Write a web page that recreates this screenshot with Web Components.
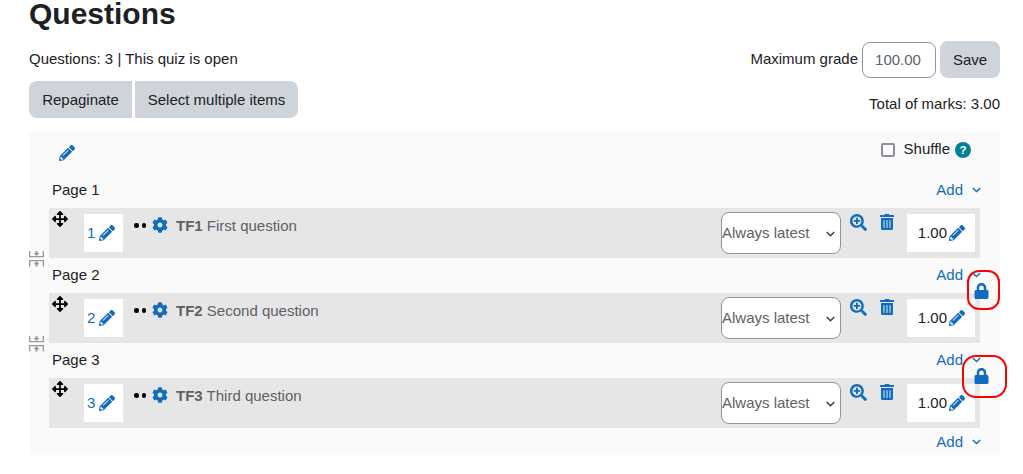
<!DOCTYPE html>
<html><head><meta charset="utf-8">
<style>
html,body{margin:0;padding:0;background:#fff;font-family:"Liberation Sans",Arial,sans-serif;font-size:15px;color:#1d2125;}
body{height:474px;overflow:hidden;}
</style></head>
<body>
<quiz-page></quiz-page>
<script>
const P={
pencil:[512,'M497.9 142.1l-46.1 46.1c-4.7 4.7-12.3 4.7-17 0l-111-111c-4.7-4.7-4.7-12.3 0-17l46.1-46.1c18.7-18.7 49.1-18.7 67.9 0l60.1 60.1c18.8 18.7 18.8 49.1 0 67.9zM284.2 99.8L21.6 362.4.4 483.9c-2.9 16.4 11.4 30.6 27.8 27.8l121.5-21.3 262.6-262.6c4.7-4.7 4.7-12.3 0-17l-111-111c-4.8-4.7-12.4-4.7-17.1 0zM124.1 339.9c-5.5-5.5-5.5-14.3 0-19.8l154-154c5.5-5.5 14.3-5.5 19.8 0s5.5 14.3 0 19.8l-154 154c-5.5 5.5-14.3 5.5-19.8 0zM88 424h48v36.3l-64.5 11.3-31.1-31.1L51.7 376H88v48z'],
move:[512,'M352.201 425.775l-79.196 79.196c-9.373 9.373-24.568 9.373-33.941 0l-79.196-79.196c-15.119-15.119-4.411-40.971 16.971-40.97h51.162L228 284H127.196v51.162c0 21.382-25.851 32.09-40.971 16.971L7.029 272.937c-9.373-9.373-9.373-24.569 0-33.941L86.225 159.8c15.119-15.119 40.971-4.411 40.971 16.971V228H228V127.196h-51.23c-21.382 0-32.09-25.851-16.971-40.971l79.196-79.196c9.373-9.373 24.568-9.373 33.941 0l79.196 79.196c15.119 15.119 4.411 40.971-16.971 40.971h-51.162V228h100.804v-51.162c0-21.382 25.851-32.09 40.97-16.971l79.196 79.196c9.373 9.373 9.373 24.569 0 33.941L425.773 352.2c-15.119 15.119-40.971 4.411-40.97-16.971V284H284v100.804h51.23c21.382 0 32.09 25.851 16.971 40.971z'],
cog:[512,'M487.4 315.7l-42.6-24.6c4.3-23.2 4.3-47 0-70.2l42.6-24.6c4.9-2.8 7.1-8.6 5.5-14-11.1-35.6-30-67.8-54.7-94.6-3.8-4.1-10-5.1-14.8-2.3L380.8 110c-17.9-15.4-38.5-27.3-60.8-35.1V25.8c0-5.6-3.9-10.5-9.4-11.7-36.7-8.2-74.3-7.8-109.2 0-5.5 1.2-9.4 6.1-9.4 11.7V75c-22.2 7.9-42.8 19.8-60.8 35.1L88.7 85.5c-4.9-2.8-11-1.9-14.8 2.3-24.7 26.7-43.6 58.9-54.7 94.6-1.7 5.4.6 11.2 5.5 14L67.3 221c-4.3 23.2-4.3 47 0 70.2l-42.6 24.6c-4.9 2.8-7.1 8.6-5.5 14 11.1 35.6 30 67.8 54.7 94.6 3.8 4.1 10 5.1 14.8 2.3l42.6-24.6c17.9 15.4 38.5 27.3 60.8 35.1v49.2c0 5.6 3.9 10.5 9.4 11.7 36.7 8.2 74.3 7.8 109.2 0 5.5-1.2 9.4-6.1 9.4-11.7v-49.2c22.2-7.9 42.8-19.8 60.8-35.1l42.6 24.6c4.9 2.8 11 1.9 14.8-2.3 24.7-26.7 43.6-58.9 54.7-94.6 1.5-5.5-.7-11.3-5.6-14.1zM256 336c-44.1 0-80-35.9-80-80s35.9-80 80-80 80 35.9 80 80-35.9 80-80 80z'],
search:[512,'M304 192v32c0 6.6-5.4 12-12 12h-56v56c0 6.6-5.4 12-12 12h-32c-6.6 0-12-5.4-12-12v-56h-56c-6.6 0-12-5.4-12-12v-32c0-6.6 5.4-12 12-12h56v-56c0-6.6 5.4-12 12-12h32c6.6 0 12 5.4 12 12v56h56c6.6 0 12 5.4 12 12zm201 284.7L476.7 505c-9.4 9.4-24.6 9.4-33.9 0L343 405.3c-4.5-4.5-7-10.6-7-17V372c-35.3 27.6-79.7 44-128 44C93.1 416 0 322.9 0 208S93.1 0 208 0s208 93.1 208 208c0 48.3-16.4 92.7-44 128h16.3c6.4 0 12.5 2.5 17 7l99.7 99.7c9.3 9.4 9.3 24.6 0 34zM344 208c0-75.2-60.8-136-136-136S72 132.8 72 208s60.8 136 136 136 136-60.8 136-136z'],
trash:[448,'M32 464a48 48 0 0 0 48 48h288a48 48 0 0 0 48-48V128H32zm272-256a16 16 0 0 1 32 0v224a16 16 0 0 1-32 0zm-96 0a16 16 0 0 1 32 0v224a16 16 0 0 1-32 0zm-96 0a16 16 0 0 1 32 0v224a16 16 0 0 1-32 0zM432 32H312l-9.4-18.7A24 24 0 0 0 281.1 0H166.8a23.72 23.72 0 0 0-21.4 13.3L136 32H16A16 16 0 0 0 0 48v32a16 16 0 0 0 16 16h416a16 16 0 0 0 16-16V48a16 16 0 0 0-16-16z'],
lock:[448,'M400 224h-24v-72C376 68.2 307.8 0 224 0S72 68.2 72 152v72H48c-26.5 0-48 21.5-48 48v192c0 26.5 21.5 48 48 48h352c26.5 0 48-21.5 48-48V272c0-26.5-21.5-48-48-48zm-104 0H152v-72c0-39.7 32.3-72 72-72s72 32.3 72 72v72z']
};
class QIcon extends HTMLElement{
 connectedCallback(){
  if(this.shadowRoot)return;
  const [w,d]=P[this.getAttribute('name')];
  const s=this.attachShadow({mode:'open'});
  s.innerHTML=`<style>:host{display:block;line-height:0;color:#0f6cbf}svg{display:block;width:100%;height:100%;fill:currentColor}</style><svg viewBox="0 0 ${w} 512"><path d="${d}"/></svg>`;
 }
}
customElements.define('q-icon',QIcon);
class QHelp extends HTMLElement{
 constructor(){super();this.attachShadow({mode:'open'}).innerHTML=`<style>:host{display:flex;align-items:center;justify-content:center;width:16px;height:16px;border-radius:50%;background:#008196;color:#fff;font:700 11.5px/16px "Liberation Sans",Arial,sans-serif}</style>?`;}
}
customElements.define('q-help',QHelp);
class QBtn extends HTMLElement{
 constructor(){super();this.attachShadow({mode:'open'}).innerHTML=`<style>:host{display:flex;align-items:center;justify-content:center;background:#ced4da;color:#1d2125;height:37px;font-size:15px;box-sizing:border-box}</style><slot></slot>`;}
}
customElements.define('q-btn',QBtn);
class PageHead extends HTMLElement{
 constructor(){super();this.attachShadow({mode:'open'}).innerHTML=`<style>
 :host{display:flex;justify-content:space-between;align-items:flex-start;box-sizing:border-box;height:35px;padding:6px 19px 0 23px}
 .add{display:flex;align-items:center;gap:9px;color:#0f6cbf;height:22px}
 svg{width:9px;height:6px;fill:none;stroke:#0f6cbf;stroke-width:1.4}
 </style><span><slot></slot></span><span class="add">Add<svg viewBox="0 0 9 6"><path d="M.8 1l3.7 3.6L8.2 1"/></svg></span>`;}
}
customElements.define('page-head',PageHead);
class QRow extends HTMLElement{
 constructor(){super();this.attachShadow({mode:'open'}).innerHTML=`<style>
 :host{display:flex;height:50px;margin-left:20px;margin-right:20px;background:#e6e6e6;color:#5c6268}
 .mv{margin:3px 0 0 3px;width:16px;height:16px;color:#000}
 .num{display:flex;align-items:center;box-sizing:border-box;width:39px;height:38px;margin:6px 0 0 16px;padding-left:3px;background:#fff;color:#0f6cbf;gap:3.5px}
 .pen{width:16px;height:16px}
 .dots{display:flex;gap:3px;margin:15px 0 0 11px;height:5px}
 .dots i{width:4.5px;height:4.5px;border-radius:50%;background:#000;display:block}
 .cog{width:16px;height:16px;margin:9px 0 0 6px}
 .name{margin:9px 0 0 8px;line-height:17px;flex:1;white-space:nowrap}
 b{font-weight:700}
 .sel{box-sizing:border-box;width:120px;height:42px;margin-top:4px;border:1px solid #8f959e;border-radius:8px;background:#fff;color:#5c6268;display:flex;align-items:center;justify-content:space-between;padding-right:5px}
 .sel svg{width:9px;height:6px;fill:none;stroke:#343a40;stroke-width:1.5;margin-top:1px}
 .zoom{width:17px;height:17px;margin:6px 0 0 9px}
 .del{width:14px;height:16px;margin:6px 0 0 13px}
 .mark{box-sizing:border-box;width:68px;height:38px;margin:6px 5px 0 13px;background:#fff;color:#1d2125;display:flex;align-items:center;justify-content:flex-end;gap:2px;padding-right:10px}
 </style>
 <q-icon class="mv" name="move"></q-icon>
 <div class="num"><span id="n"></span><q-icon class="pen" name="pencil"></q-icon></div>
 <div class="dots"><i></i><i></i></div>
 <q-icon class="cog" name="cog"></q-icon>
 <div class="name"><b id="c"></b> <span id="t"></span></div>
 <div class="sel"><span>Always latest</span><svg viewBox="0 0 10 6"><path d="M.8 .8L5 5l4.2-4.2"/></svg></div>
 <q-icon class="zoom" name="search"></q-icon>
 <q-icon class="del" name="trash"></q-icon>
 <div class="mark"><span>1.00</span><q-icon class="pen" name="pencil"></q-icon></div>`;}
 connectedCallback(){
  const s=this.shadowRoot;
  s.getElementById('n').textContent=this.getAttribute('num');
  s.getElementById('c').textContent=this.getAttribute('code');
  s.getElementById('t').textContent=this.getAttribute('title');
 }
}
customElements.define('q-row',QRow);
class JoinIcon extends HTMLElement{
 constructor(){super();this.attachShadow({mode:'open'}).innerHTML=`<style>:host{display:block;position:absolute;left:0;width:15px;height:16px;line-height:0}svg{display:block}</style>
 <svg width="15" height="16" viewBox="0 0 15 16"><path fill="#9a9a9a" d="M0 0h1.3v5h12.4V0H15v6.3H0zM0 9h15v6.5h-1.3v-5.2H1.3v5.2H0zM6.5 0h2v2h2L7.5 5 4.5 2h2zM7.5 10.3l3 3h-2v2.2h-2v-2.2h-2z"/></svg>`;}
}
customElements.define('join-icon',JoinIcon);
class LockMark extends HTMLElement{
 constructor(){super();this.attachShadow({mode:'open'}).innerHTML=`<style>
 :host{display:block;position:absolute;box-sizing:border-box;border:2px solid #f00}
 q-icon{position:absolute;width:15px;height:16px}
 </style><q-icon name="lock"></q-icon>`;}
 connectedCallback(){
  const q=this.shadowRoot.querySelector('q-icon');
  q.style.left=this.getAttribute('ix')+'px';q.style.top=this.getAttribute('iy')+'px';
 }
}
customElements.define('lock-mark',LockMark);
class QuizPage extends HTMLElement{
 constructor(){super();this.attachShadow({mode:'open'}).innerHTML=`<style>
 :host{display:block;position:relative;padding:0 23px 0 29px;font:15px/22px "Liberation Sans",Arial,sans-serif;color:#1d2125}
 h2{margin:0;font-size:30px;line-height:28px;font-weight:700;height:28px}
 .top{display:flex;justify-content:space-between;margin-top:13px;height:37px;align-items:center}
 .mg{display:flex;align-items:center;gap:4px}
 .mg>span{margin-top:-2px}
 .input{box-sizing:border-box;width:74px;height:36px;border:1px solid #8f959e;border-radius:8px;display:flex;align-items:center;justify-content:center;color:#5c6268;background:#fff;padding-right:2px}
 .info{margin-top:-2px}
 .second{display:flex;justify-content:space-between;margin-top:3px;height:37px}
 .btns{display:flex;gap:3px}
 .total{padding-top:12px;align-self:flex-start}
 .panel{background:#fafafa;margin-top:14px;height:323px;position:relative}
 .head{display:flex;justify-content:space-between;height:41px;padding:10px 29px 0 30px;box-sizing:border-box}
 .edit{width:16px;height:16px;margin-top:3px}
 .shuffle{display:flex;align-items:center;gap:9px;height:16px;margin-top:-1px}
 .cb{box-sizing:border-box;width:14px;height:14px;border:2px solid #8f8f9d;border-radius:2px;background:#fff;margin-top:2px}
 q-help{margin:1px 0 0 -4px}
 </style>
 <h2>Questions</h2>
 <div class="top"><span class="info">Questions: 3 | This quiz is open</span>
 <div class="mg"><span>Maximum grade</span><div class="input">100.00</div><q-btn style="width:60px;border-radius:8px">Save</q-btn></div></div>
 <div class="second"><div class="btns"><q-btn style="width:103px;border-radius:8px 0 0 8px">Repaginate</q-btn><q-btn style="width:163px;border-radius:0 8px 8px 0">Select multiple items</q-btn></div>
 <div class="total">Total of marks: 3.00</div></div>
 <div class="panel">
  <div class="head"><q-icon class="edit" name="pencil"></q-icon><div class="shuffle"><span class="cb"></span><span>Shuffle</span><q-help></q-help></div></div>
  <page-head>Page 1</page-head>
  <q-row num="1" code="TF1" title="First question"></q-row>
  <join-icon style="top:119px"></join-icon>
  <page-head>Page 2</page-head>
  <q-row num="2" code="TF2" title="Second question"></q-row>
  <join-icon style="top:204px"></join-icon>
  <page-head>Page 3</page-head>
  <q-row num="3" code="TF3" title="Third question"></q-row>
  <page-head style="padding-top:3px"></page-head>
 </div>
 <lock-mark ix="5" iy="11" style="left:967px;top:270px;width:33px;height:40px;border-radius:12px"></lock-mark>
 <lock-mark ix="10" iy="11" style="left:962px;top:355px;width:45px;height:43px;border-radius:14px"></lock-mark>
 `;}
}
customElements.define('quiz-page',QuizPage);
</script>
</body></html>
